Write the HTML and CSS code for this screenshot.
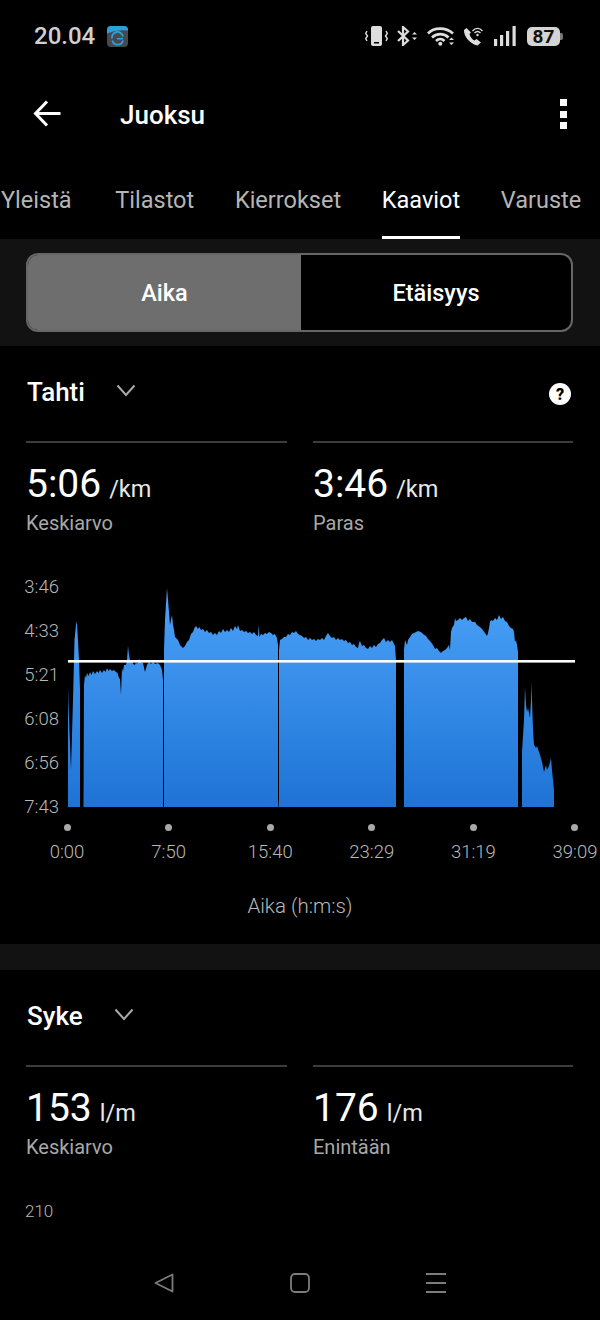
FILE: index.html
```html
<!DOCTYPE html>
<html lang="fi">
<head>
    <meta charset="UTF-8">
    <meta name="viewport" content="width=device-width, initial-scale=1.0">
    <title>Juoksu</title>
    <link rel="stylesheet" href="styles.css">
</head>
<body>
    <div class="phone">
        <div class="status-bar">
            <div class="status-left">
                <span class="clock">20.04</span>
                <svg class="app-icon" width="21" height="21" viewBox="0 0 21 21">
                    <rect width="21" height="21" rx="4" fill="#454a4e"/>
                    <path d="M0 7.500 Q10 3 21 4.500 V4 Q21 0 17 0 H4 Q0 0 0 4 Z" fill="#2f9fdc"/>
                    <path d="M16 10.500 A5.500 5.500 0 0 0 5 12.500 M5.300 14.500 A5.500 5.500 0 0 0 16 14.500" fill="none" stroke="#2f9fdc" stroke-width="1.800"/>
                    <path d="M10 12.700 H16" stroke="#2f9fdc" stroke-width="1.500"/>
                </svg>
            </div>
            <div class="status-right">
                <svg width="23" height="20" viewBox="0 0 23 20" fill="none" stroke="#ddd">
                    <rect x="6" y="0" width="11" height="20" rx="2" fill="#ddd" stroke="none"/>
                    <rect x="9" y="16" width="5" height="1.500" fill="#000" stroke="none"/>
                    <path d="M2 5 L0.700 7.500 L2.500 10 L0.700 12.500 L2 15 M21 5 L22.300 7.500 L20.500 10 L22.300 12.500 L21 15" stroke-width="1.400"/>
                </svg>
                <svg width="21" height="20" viewBox="0 0 21 20" fill="none" stroke="#ddd">
                    <path d="M1 5 L11 14.500 L6 19 V1 L11 5.500 L1 15" stroke-width="2.200"/>
                    <path d="M15 8.500 L17.500 6 L20 8.500 Z M15 11.500 L17.500 14 L20 11.500 Z" fill="#ddd" stroke="none"/>
                </svg>
                <svg class="wifi" width="28" height="19" viewBox="0 0 28 19" fill="none" stroke="#ddd" stroke-width="2.600">
                    <path d="M1 6.500 C7 0 19 0 26 6.500"/>
                    <path d="M5 10.500 C9.500 6 17 6 21.500 10.500"/>
                    <path d="M9 14 C11.500 11.500 15 11.500 17.500 14"/>
                    <circle cx="13.300" cy="16.800" r="2" fill="#ddd" stroke="none"/>
                    <path d="M22 13 L24.500 10.500 L27 13 Z M22 15.500 L24.500 18 L27 15.500 Z" fill="#ddd" stroke="none"/>
                </svg>
                <svg class="call" width="20" height="19" viewBox="0 0 20 19" fill="none" stroke="#ddd">
                    <path d="M3.500 1 L1 3 C0.500 9 7 17 14.500 18.500 L18 15.500 L13.500 12 L11.500 13.500 C9 12.500 7 9.500 6.500 7 L8 5.500 Z" fill="#ddd" stroke="none"/>
                    <path d="M9.500 4 C12.500 0.500 16.500 0.500 19.500 4 M11.500 6 C13.500 4 15.500 4 17.500 6" stroke-width="1.400"/>
                    <circle cx="14.500" cy="8" r="1.200" fill="#ddd" stroke="none"/>
                </svg>
                <svg width="22" height="20" viewBox="0 0 22 20" fill="#ddd">
                    <rect x="0" y="13" width="3.200" height="7"/>
                    <rect x="6" y="9" width="3.200" height="11"/>
                    <rect x="12" y="5" width="3.200" height="15"/>
                    <rect x="18.500" y="0" width="3.200" height="20"/>
                </svg>
                <div class="battery"><span class="battery-level">87</span></div>
            </div>
        </div>

        <header class="app-bar">
            <svg class="back" width="28" height="27" viewBox="0 0 28 27" fill="none" stroke="#fff" stroke-width="3">
                <path d="M14 1.500 L2.500 13.500 L14 25.500 M2.500 13.500 H27.500"/>
            </svg>
            <h1 class="title">Juoksu</h1>
            <div class="kebab"><i></i><i></i><i></i></div>
        </header>

        <nav class="tabs">
            <a>Yleistä</a>
            <a>Tilastot</a>
            <a>Kierrokset</a>
            <a class="active">Kaaviot</a>
            <a>Varuste</a>
        </nav>

        <div class="band">
            <div class="segmented">
                <div class="seg on">Aika</div>
                <div class="seg">Etäisyys</div>
            </div>
        </div>

        <section class="metric">
            <div class="metric-head">
                <span class="metric-name">Tahti</span>
                <svg class="chevron" width="20" height="13" viewBox="0 0 20 13" fill="none" stroke="#aaa" stroke-width="2">
                    <path d="M1.500 1.500 L10 11 L18.500 1.500"/>
                </svg>
                <svg class="help" width="22" height="22" viewBox="0 0 22 22">
                    <circle cx="11" cy="11" r="11" fill="#fff"/>
                    <text x="11" y="16.500" text-anchor="middle" class="help-mark">?</text>
                </svg>
            </div>
            <div class="stats">
                <div class="stat">
                    <div class="stat-value"><b>5:06</b> <small>/km</small></div>
                    <div class="stat-label">Keskiarvo</div>
                </div>
                <div class="stat">
                    <div class="stat-value"><b>3:46</b> <small>/km</small></div>
                    <div class="stat-label">Paras</div>
                </div>
            </div>

            <div class="plot">
                <div class="y-axis">
                    <span>3:46</span>
                    <span>4:33</span>
                    <span>5:21</span>
                    <span>6:08</span>
                    <span>6:56</span>
                    <span>7:43</span>
                </div>
                <svg class="area" width="540" height="264" viewBox="60 564 540 264">
                    <defs>
                        <linearGradient id="pace" gradientUnits="userSpaceOnUse" x1="0" y1="590" x2="0" y2="807">
                            <stop offset="0" stop-color="#4ba2f8"/>
                            <stop offset="1" stop-color="#1e73d5"/>
                        </linearGradient>
                    </defs>
                    <g fill="url(#pace)">
                        <path d="M68 807 L68 686 L68.500 705 L71 770 L73 700 L74.500 640 L76 625 L76.700 621 L77.500 632 L79 660 L80 690 L80 807 Z"/>
                        <path d="M83.500 807 L84 685 L85 675 L86 678 L87 673 L88.500 676 L90 672 L91.500 675 L93 671 L95 674 L97 671 L98.500 673 L100 670 L102 673 L104 670 L105.500 672 L107 668 L108.500 671 L110 669 L112 671 L114 670 L116 672 L117.500 673 L119 678 L120 679 L121 695 L122 668 L123 672 L124 665 L126 665 L127 660 L128 646 L129 655 L130 660 L132 660 L133 664 L135 665 L136 662 L137 664 L139 659 L141 662 L143 663 L144.500 670 L145 672 L147 665 L149 662 L151 664 L153 662 L155 664 L158 663 L160 665 L162 670 L163 680 L163 807 Z"/>
                        <path d="M164 807 L164 650 L165 620 L167 588 L168 600 L170 625 L172 615 L173 625 L174 630 L175 637 L176 638 L178 640 L180 645 L183 648 L185 646 L187 642 L189 640 L191 634 L193 632 L194.500 628 L196 626 L198 629 L199.500 627 L201 630 L203 629 L205 632 L207 630 L209 633 L211 632 L213 635 L215 633 L217 635 L219 631 L221 633 L223 629 L225 632 L227 630 L229 632 L231 628 L233 631 L235 626 L237 629 L238 625 L240 631 L242 630 L244 632 L246 631 L248 633 L250 632 L252 634 L254 632 L256 635 L258 636 L258.700 625 L259.500 637 L261 634 L263 635 L265 633 L267 634 L269 632 L271 633 L273 635 L275 634 L277 638 L278 645 L278 800 L278.500 807 Z"/>
                        <path d="M279 807 L279 650 L280 640 L282 639 L284 637 L286 637 L288 634 L290 635 L292 632 L294 633 L296 631 L298 634 L300 635 L302 636 L304 638 L306 637 L308 640 L310 638 L312 640 L314 639 L316 641 L318 639 L320 640 L322 638 L324 640 L326 636 L328 633 L330 636 L332 638 L334 637 L336 640 L338 638 L340 640 L342 639 L344 641 L346 640 L348 643 L350 642 L352 645 L354 644 L356 647 L358 648 L359 643 L360 641 L362 646 L364 645 L366 648 L368 649 L370 646 L372 648 L374 645 L376 647 L378 644 L380 643 L382 640 L384 638 L386 642 L388 640 L390 642 L392 640 L394 644 L395 646 L396 660 L396 807 Z"/>
                        <path d="M404 807 L404 650 L405 640 L407 645 L408 640 L410 637 L412 634 L414 633 L416 632 L418 631 L421 632 L423 634 L426 636 L428 639 L430 641 L433 645 L435 649 L437 648 L439 651 L441 653 L443 651 L445 650 L447 648 L449 645 L450 650 L451 632 L452 628 L454 625 L455 618 L456 621 L458 620 L460 618 L462 620 L464 618 L466 617 L468 621 L470 619 L472 622 L475 622 L477 625 L480 627 L482 629 L485 633 L487 636 L488 633 L489 628 L490 622 L491 620 L493 621 L495 618 L497 620 L499 615 L501 619 L503 617 L505 621 L507 622 L509 626 L511 628 L513 629 L514 632 L515 642 L516 640 L517 645 L518 652 L518 807 Z"/>
                        <path d="M522 807 L522 752 L524 720 L525 687 L526 705 L527 712 L528 708 L530 718 L531 700 L531.500 682 L532 700 L533 730 L534 745 L536 748 L537 746 L538 749 L540 755 L542 762 L544 772 L546 765 L547 770 L549 766 L551 758 L552 770 L554 790 L554 807 Z"/>
                    </g>
                    <rect x="68" y="660" width="507" height="2.600" fill="#fff"/>
                </svg>
            </div>
            <div class="x-axis">
                <div class="tick">0:00</div>
                <div class="tick">7:50</div>
                <div class="tick">15:40</div>
                <div class="tick">23:29</div>
                <div class="tick">31:19</div>
                <div class="tick">39:09</div>
            </div>
            <div class="x-title">Aika (h:m:s)</div>
        </section>

        <div class="divider"></div>

        <section class="metric">
            <div class="metric-head">
                <span class="metric-name">Syke</span>
                <svg class="chevron" width="20" height="13" viewBox="0 0 20 13" fill="none" stroke="#aaa" stroke-width="2">
                    <path d="M1.500 1.500 L10 11 L18.500 1.500"/>
                </svg>
            </div>
            <div class="stats">
                <div class="stat">
                    <div class="stat-value"><b>153</b> <small>l/m</small></div>
                    <div class="stat-label">Keskiarvo</div>
                </div>
                <div class="stat">
                    <div class="stat-value"><b>176</b> <small>l/m</small></div>
                    <div class="stat-label">Enintään</div>
                </div>
            </div>
            <div class="hr-top">210</div>
        </section>

        <div class="nav-bar">
            <svg width="20" height="20" viewBox="0 0 20 20" fill="none" stroke="#7c7c7c" stroke-width="1.800" stroke-linejoin="round">
                <path d="M1.500 10 L18.500 1.500 V18.500 Z"/>
            </svg>
            <svg width="20" height="20" viewBox="0 0 20 20" fill="none" stroke="#7c7c7c" stroke-width="1.800">
                <rect x="1" y="1" width="18" height="18" rx="4"/>
            </svg>
            <svg width="20" height="20" viewBox="0 0 20 20" fill="none" stroke="#7c7c7c" stroke-width="1.800">
                <path d="M0 1 H20 M0 10 H20 M0 19 H20"/>
            </svg>
        </div>
    </div>
</body>
</html>
```

FILE: styles.css
```css
* { box-sizing: border-box; }
body { margin: 0; background: #000; font-family: Roboto, "Liberation Sans", sans-serif; color: #fff; }
.phone { position: relative; width: 600px; height: 1320px; overflow: hidden; background: #000; }

.status-bar { display: flex; justify-content: space-between; align-items: center; height: 72px; padding: 0 37px 0 34px; }
.status-left { display: flex; align-items: center; gap: 12px; }
.clock { font-size: 24px; font-weight: 500; color: #d0d0d0; }
.status-right { display: flex; align-items: center; gap: 9px; }
.status-right .wifi { margin-right: -1px; }
.status-right .call { margin-right: 2px; }
.battery { position: relative; width: 33px; height: 19px; margin-left: 2px; margin-right: 3px; border-radius: 5px; background: #d4d4d4; text-align: center; }
.battery::after { content: ""; position: absolute; right: -3px; top: 6px; width: 3px; height: 7px; border-radius: 0 2px 2px 0; background: #777; }
.battery-level { display: block; font-size: 19px; font-weight: 700; line-height: 19px; color: #111; }

.app-bar { display: flex; align-items: center; height: 84px; padding: 0 33px; }
.back { flex: none; margin-top: -1px; }
.title { flex: 1; margin: 2px 0 0 59px; font-size: 26px; font-weight: 500; }
.kebab { display: flex; flex-direction: column; gap: 4.500px; }
.kebab i { display: block; width: 7px; height: 7px; background: #fff; }

.tabs { display: flex; gap: 40.700px; height: 83px; padding: 0 0 0 1px; overflow: hidden; white-space: nowrap; }
.tabs a { display: flex; align-items: center; height: 83px; padding-top: 8px; font-size: 23.500px; color: #b5b5b5; border-bottom: 3px solid transparent; }
.tabs a:first-child { margin-right: 3px; }
.tabs a.active { color: #fff; border-bottom-color: #fff; }

.band { height: 107px; padding: 14px 27px 0 26px; background: #121212; }
.segmented { display: flex; height: 79px; border: 2px solid #666; border-radius: 12px; overflow: hidden; background: #000; }
.seg { display: flex; flex: 1; align-items: center; justify-content: center; font-size: 23.500px; font-weight: 500; }
.seg.on { flex: 0 0 273px; background: #6e6e6e; }

.metric-head { display: flex; align-items: center; height: 40px; margin-top: 26px; padding: 0 29px 0 27px; }
.metric-name { font-size: 26px; font-weight: 500; }
.chevron { margin-left: 31px; margin-top: -4px; }
.help { margin-left: auto; margin-top: 4px; }
.help-mark { font-size: 16px; font-weight: 900; fill: #000; font-family: Roboto, sans-serif; }

.stats { display: grid; grid-template-columns: 261px 260px; gap: 26px; margin-top: 29px; padding-left: 26px; }
.stat { border-top: 2px solid #3c3c3c; padding-top: 20px; }
.stat-value { font-size: 24px; line-height: 42px; color: #e8e8e8; }
.stat-value b { font-size: 39px; font-weight: 400; color: #fff; }
.stat-value small { font-size: 23.500px; margin-left: 2px; }
.stat-label { font-size: 20px; line-height: 26px; color: #a8a8a8; }

.plot { display: flex; margin-top: 28px; height: 264px; }
.y-axis { display: flex; flex: none; flex-direction: column; width: 60px; padding: 0.500px 1px 0 0; }
.y-axis span { display: flex; align-items: center; justify-content: flex-end; height: 44px; flex: none; font-size: 18.500px; font-weight: 300; color: #b8b8b8; }
.x-axis { display: flex; justify-content: space-between; padding: 0 5px 0 47px; }
.tick { display: flex; flex-direction: column; align-items: center; width: 40px; font-size: 18.500px; font-weight: 300; color: #b8b8b8; white-space: nowrap; }
.tick::before { content: ""; width: 7px; height: 7px; margin-top: -4px; margin-bottom: 10px; border-radius: 50%; background: #a8a8a8; }
.x-title { margin-top: 31px; text-align: center; font-size: 20.500px; font-weight: 300; color: #b8b8b8; }

.divider { height: 26px; margin-top: 26px; background: #121212; }
.hr-top { margin: 41px 0 0 25px; font-size: 17px; font-weight: 300; color: #b8b8b8; }

.nav-bar { position: absolute; left: 154px; right: 154px; top: 1273px; display: flex; justify-content: space-between; }
```
